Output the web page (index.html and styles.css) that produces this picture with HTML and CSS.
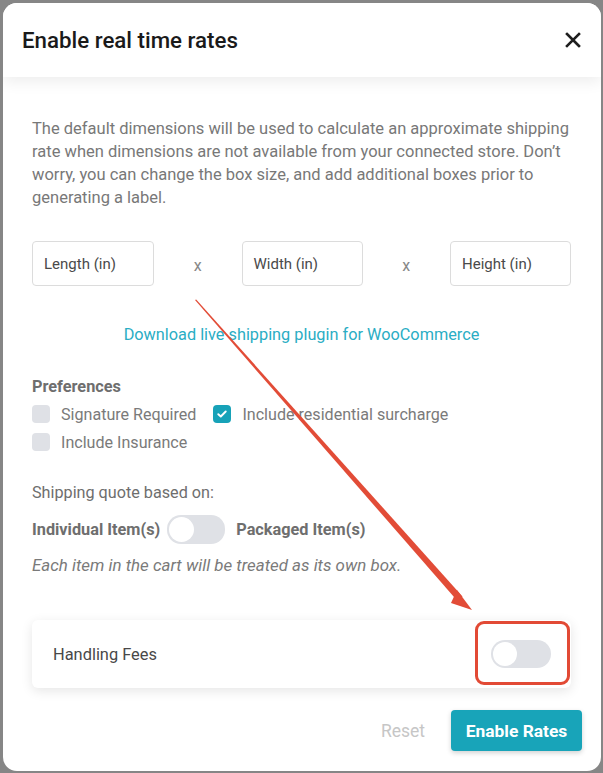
FILE: index.html
```html
<!DOCTYPE html>
<html>
<head>
<meta charset="utf-8">
<link rel="stylesheet" href="styles.css">
</head>
<body>
<div class="modal">
  <div class="header">
    <h1 class="title">Enable real time rates</h1>
    <svg class="close" width="16" height="16" viewBox="0 0 16 16"><path d="M2 2 L14 14 M14 2 L2 14" stroke="#1f1f1f" stroke-width="2.6" stroke-linecap="square"/></svg>
  </div>
  <div class="content">
    <p class="intro">The default dimensions will be used to calculate an approximate shipping rate when dimensions are not available from your connected store. Don’t worry, you can change the box size, and add additional boxes prior to generating a label.</p>
    <div class="dims">
      <div class="field">Length (in)</div>
      <span class="times">x</span>
      <div class="field">Width (in)</div>
      <span class="times">x</span>
      <div class="field">Height (in)</div>
    </div>
    <div class="link">Download live shipping plugin for WooCommerce</div>
    <div class="prefs-title">Preferences</div>
    <div class="check-row">
      <label class="check"><span class="box"></span>Signature Required</label>
      <label class="check"><span class="box on"><svg width="10" height="8" viewBox="0 0 10 8"><path d="M1.3 4.2 L3.8 6.5 L8.7 1.5" fill="none" stroke="#fff" stroke-width="1.9" stroke-linecap="round" stroke-linejoin="round"/></svg></span>Include residential surcharge</label>
    </div>
    <div class="check-row">
      <label class="check"><span class="box"></span>Include Insurance</label>
    </div>
    <div class="quote-label">Shipping quote based on:</div>
    <div class="quote-row">
      <span class="strong">Individual Item(s)</span>
      <span class="toggle small"><span class="knob"></span></span>
      <span class="strong">Packaged Item(s)</span>
    </div>
    <div class="note">Each item in the cart will be treated as its own box.</div>
    <div class="card">
      <span class="card-label">Handling Fees</span>
      <span class="toggle"><span class="knob"></span></span>
    </div>
  </div>
  <div class="footer">
    <span class="reset">Reset</span>
    <span class="primary">Enable Rates</span>
  </div>
  <svg class="arrow" width="603" height="773" viewBox="0 0 603 773">
    <polygon points="195,300 196.2,299.4 462.5,596.5 457.5,601" fill="#e24c37"/>
    <polygon points="457,590 472,610 451,603" fill="#e24c37"/>
  </svg>
  <div class="highlight"></div>
</div>
</body>
</html>
```

FILE: styles.css
```css
* { box-sizing: border-box; }
html, body { margin: 0; padding: 0; }
body {
  background: #868686;
  width: 603px;
  height: 773px;
  overflow: hidden;
  font-family: Roboto, "Liberation Sans", sans-serif;
}
.modal {
  position: relative;
  margin: 3px 2px 0 3px;
  height: 768px;
  background: #fff;
  border-radius: 14px;
  overflow: hidden;
}
.header {
  height: 74px;
  display: flex;
  align-items: center;
  justify-content: space-between;
  padding: 0 20px 0 19px;
  background: #fff;
  box-shadow: 0 5px 14px rgba(0, 0, 0, 0.07);
  position: relative;
  z-index: 1;
}
.title {
  margin: 0;
  font-size: 22.3px;
  font-weight: 500;
  color: #1a1a1a;
}
.close { display: block; }
.content {
  padding: 40px 30px 0 29px;
}
.intro {
  margin: 0;
  font-size: 16.5px;
  line-height: 23px;
  color: #787878;
}
.dims {
  margin-top: 32px;
  display: flex;
  align-items: center;
  justify-content: space-between;
}
.field {
  width: 122px;
  height: 45px;
  border: 1px solid #dcdcdc;
  border-radius: 4px;
  display: flex;
  align-items: center;
  padding-left: 11px;
  font-size: 15px;
  color: #4a4a4a;
}
.field + .times + .field { width: 121px; }
.times {
  font-size: 16px;
  color: #888;
  margin-top: 4px;
}
.link {
  margin-top: 39px;
  text-align: center;
  font-size: 16.3px;
  line-height: 20px;
  color: #2aadc4;
}
.prefs-title {
  margin-top: 32px;
  font-size: 16.3px;
  line-height: 20px;
  font-weight: 700;
  color: #6e6e6e;
}
.check-row {
  display: flex;
  gap: 17px;
  height: 28px;
  align-items: center;
}
.prefs-title + .check-row { margin-top: 3px; }
.check {
  display: flex;
  align-items: center;
  gap: 11px;
  font-size: 16.1px;
  color: #7a7a7a;
}
.box {
  width: 18px;
  height: 18px;
  border-radius: 4px;
  background: #dfe1e6;
  display: flex;
  align-items: center;
  justify-content: center;
}
.box.on { background: #17a2b8; }
.quote-label {
  margin-top: 27px;
  font-size: 16.2px;
  line-height: 20px;
  color: #6e6e6e;
}
.quote-row {
  margin-top: 11px;
  display: flex;
  align-items: center;
  height: 30px;
}
.strong {
  font-size: 16.3px;
  font-weight: 700;
  color: #6e6e6e;
}
.toggle {
  width: 60px;
  height: 28px;
  border-radius: 14px;
  background: #dfe1e6;
  position: relative;
  display: inline-block;
}
.toggle .knob {
  position: absolute;
  left: 2px;
  top: 2px;
  width: 24px;
  height: 24px;
  border-radius: 50%;
  background: #fff;
}
.toggle.small {
  width: 58px;
  height: 29px;
  margin: 0 11px 0 7px;
}
.toggle.small .knob { width: 25px; height: 25px; }
.note {
  margin-top: 11px;
  font-size: 16.9px;
  line-height: 20px;
  font-style: italic;
  color: #7a7a7a;
}
.card {
  margin-top: 45px;
  height: 68px;
  border-radius: 6px;
  background: #fff;
  box-shadow: 0 3px 12px rgba(0, 0, 0, 0.1);
  display: flex;
  align-items: center;
  justify-content: space-between;
  padding: 0 20px 0 21px;
}
.card-label {
  font-size: 16.4px;
  color: #484848;
}
.footer {
  margin-top: 22px;
  display: flex;
  justify-content: flex-end;
  align-items: center;
  gap: 26px;
  padding-right: 19px;
}
.reset {
  font-size: 17.5px;
  color: #c6c6c6;
}
.primary {
  width: 131px;
  height: 41px;
  border-radius: 4px;
  background: #18a4b9;
  color: #fff;
  font-size: 17.4px;
  font-weight: 700;
  display: flex;
  align-items: center;
  justify-content: center;
  box-shadow: 0 2px 5px rgba(0, 0, 0, 0.18);
}
.arrow {
  position: absolute;
  left: -3px;
  top: -3px;
  pointer-events: none;
}
.highlight {
  position: absolute;
  left: 472px;
  top: 618px;
  width: 95px;
  height: 64px;
  border: 3px solid #e24a35;
  border-radius: 9px;
}
```
